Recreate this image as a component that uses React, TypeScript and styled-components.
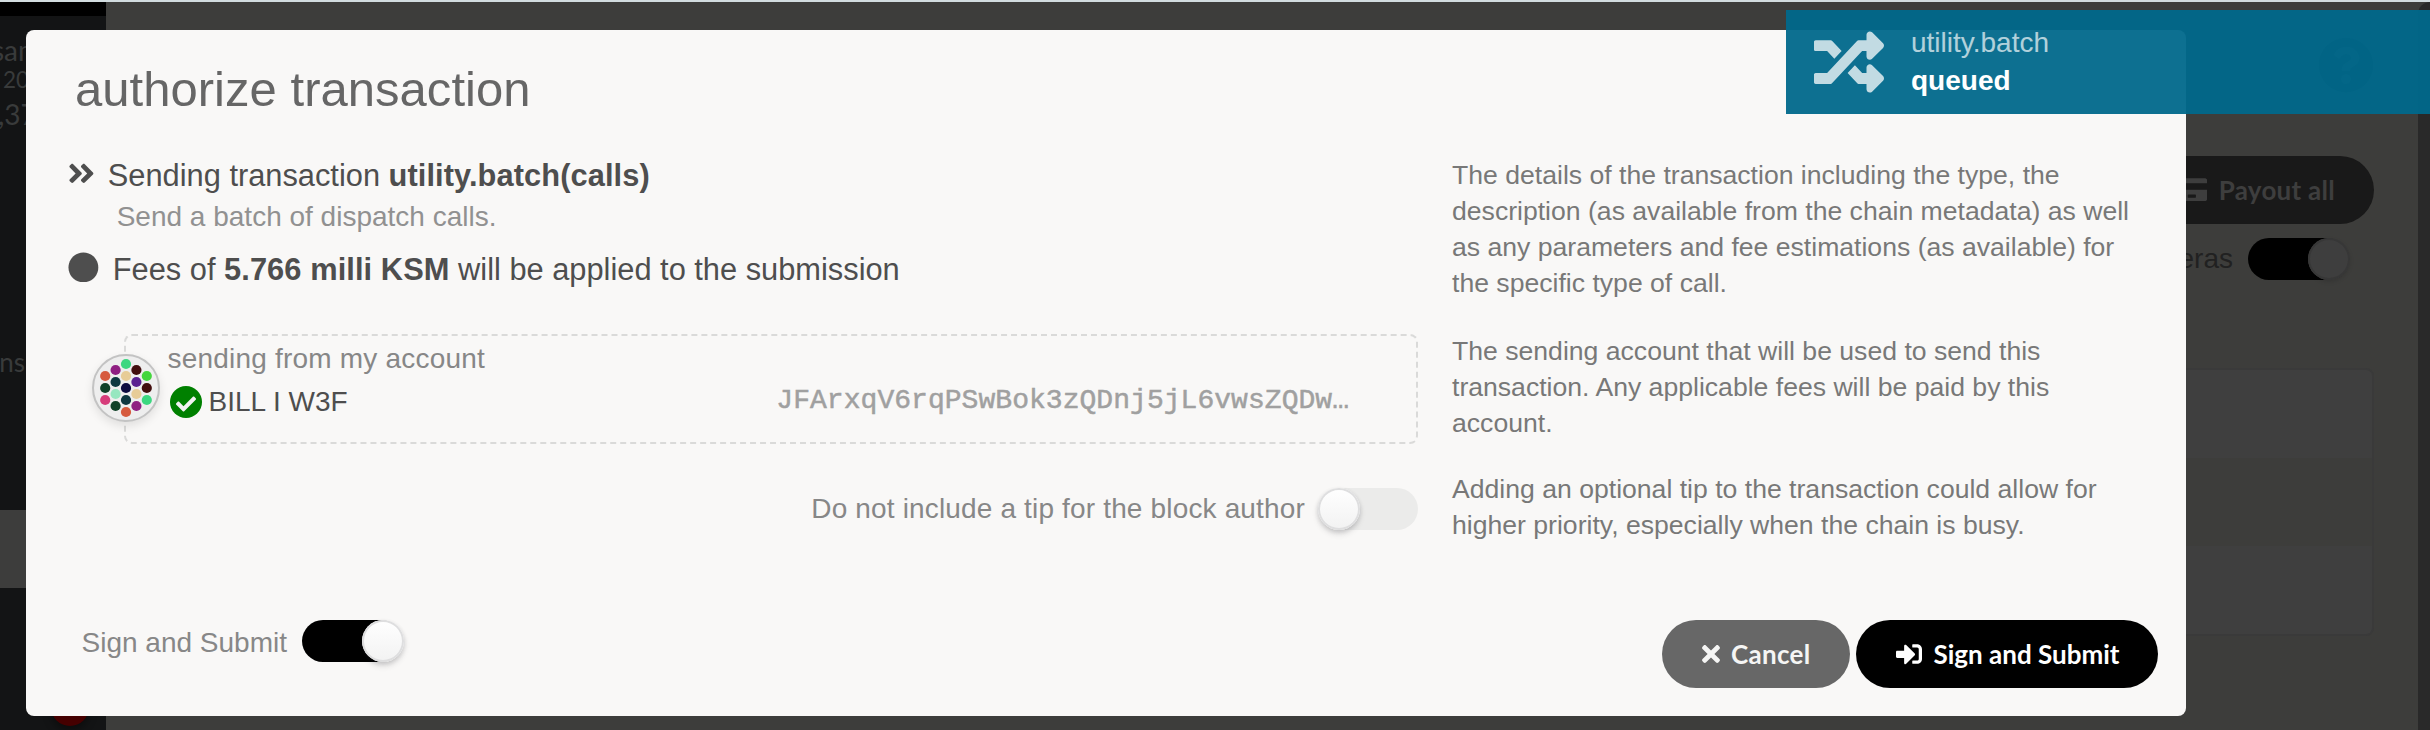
import React from 'react';
import styled, { createGlobalStyle, css } from 'styled-components';
import {
  FaAngleDoubleRight,
  FaCheck,
  FaCircle,
  FaCreditCard,
  FaQuestionCircle,
  FaRandom,
  FaSignInAlt,
  FaTimes,
} from 'react-icons/fa';

const sans = '"Liberation Sans", Arial, Helvetica, sans-serif';
const lato = 'Lato, "Liberation Sans", sans-serif';
const mono = '"Liberation Mono", "Courier New", monospace';

const GlobalStyle = createGlobalStyle`
  *, *::before, *::after { box-sizing: border-box; }
  body { margin: 0; background: #3d3d3b; font-family: ${sans}; }
  svg { display: block; flex: none; }
`;

const Screen = styled.div`
  position: relative;
  width: 2430px;
  height: 730px;
  overflow: hidden;
  border-top: 2px solid #d2dcdf;
`;

/* ---------- page behind the dialog ---------- */

const Backdrop = styled.div`
  display: flex;
  height: 100%;
`;

const Sidebar = styled.aside`
  flex: none;
  display: flex;
  flex-direction: column;
  width: 106px;
  background: #131415;
  border-top: 14px solid #000;
  color: #393b3b;
  font-family: ${lato};
  white-space: nowrap;
  overflow: hidden;
`;

const ChainLine = styled.div<{ $size: number; $height: number; $shift: number }>`
  font-size: ${(p) => p.$size}px;
  line-height: ${(p) => p.$height}px;
  margin-left: ${(p) => p.$shift}px;
`;

const ChainInfo = styled.div`
  padding-top: 16px;
  height: 306px;
`;

const MenuItem = styled.div`
  display: flex;
  justify-content: flex-end;
  width: 25px;
  height: 80px;
  line-height: 80px;
  font-size: 26px;
  font-weight: 400;
`;

const ActiveItem = styled.div`
  height: 78px;
  margin-top: 108px;
  background: #3d3d3c;
`;

const AlertDot = styled.div`
  flex: none;
  width: 38px;
  height: 38px;
  margin: 100px 0 0 51px;
  border-radius: 50%;
  background: #450000;
  box-shadow: 0 4px 8px rgba(0, 0, 0, 0.4);
`;

const Main = styled.main`
  flex: 1;
  display: flex;
  flex-direction: column;
  align-items: flex-end;
  padding: 35px 44px 0 40px;
  background: #3d3d3b;
  color: #212121;
`;

const Gutter = styled.div`
  flex: none;
  width: 12px;
  border-top-left-radius: 12px;
  background: #292929;
`;

const GutterWell = styled.div`
  flex: none;
  display: flex;
  background: #3d3d3b;
`;

const HelpIcon = styled.div`
  font-size: 56px;
  color: #191919;
`;

const PayoutButton = styled.div`
  display: flex;
  align-items: center;
  gap: 12px;
  height: 68px;
  margin-top: 63px;
  padding: 0 39px;
  border-radius: 34px;
  background: #191919;
  color: #3e3e3e;
  font: 700 26px ${lato};
  letter-spacing: 0.27px;

  svg {
    font-size: 29.25px;
  }
`;

const ErasRow = styled.div`
  display: flex;
  margin: 14px 26px 0 0;
`;

const Summary = styled.div`
  flex: none;
  align-self: stretch;
  margin-top: 88px;
  border: 2px solid #3a3a3a;
  border-radius: 8px;
  overflow: hidden;
`;

const SummaryRow = styled.div<{ $odd?: boolean }>`
  height: 88px;
  background: ${(p) => (p.$odd ? '#3f3f3f' : '#3d3d3b')};
`;

/* ---------- toggle ---------- */

const ToggleLabel = styled.span<{ $gap: number; $nudge: number }>`
  margin: ${(p) => p.$nudge}px ${(p) => p.$gap}px 0 0;
  font-size: 28px;
  line-height: 42px;
  white-space: nowrap;
`;

const Track = styled.span<{ $on?: boolean; $dim?: boolean }>`
  flex: none;
  display: flex;
  width: 100px;
  height: 42px;
  padding-left: ${(p) => (p.$on ? 60 : 0)}px;
  border-radius: 21px;
  background: ${(p) => (p.$on ? '#000' : '#ebebea')};

  &::after {
    content: '';
    flex: none;
    width: 42px;
    height: 42px;
    border-radius: 50%;
    ${(p) =>
      p.$dim
        ? css`
            background: #3e3e3e;
            box-shadow: 0 2px 4px rgba(0, 0, 0, 0.12), inset 0 0 0 2px #373737;
          `
        : css`
            background: linear-gradient(#fff, #f2f2f2);
            box-shadow: 0 2px 4px rgba(34, 36, 38, 0.15), 0 4px 6px rgba(34, 36, 38, 0.12),
              inset 0 0 0 2px #dededf;
          `}
  }
`;

/* ---------- dialog ---------- */

const Dialog = styled.section`
  position: absolute;
  top: 28px;
  left: 26px;
  display: flex;
  flex-direction: column;
  width: 2160px;
  height: 686px;
  padding: 29px 28px 28px 42px;
  border-radius: 8px;
  background: #f9f8f7;
  color: #4e4e4e;
`;

const Title = styled.h1`
  margin: 0 0 36px 7px;
  font-size: 49px;
  line-height: 60px;
  font-weight: 400;
  letter-spacing: 0.03px;
  color: #666;
`;

const Columns = styled.div`
  flex: 1;
  display: grid;
  grid-template-columns: 1350px 706px;
  column-gap: 34px;
  align-items: start;
`;

const Details = styled.div`
  display: flex;
  flex-direction: column;
`;

const InfoLine = styled.div<{ $gap: number; $inset?: number }>`
  display: flex;
  align-items: center;
  gap: ${(p) => p.$gap}px;
  height: 40px;
  font-size: 30.8px;
  line-height: 40px;
  white-space: pre;

  svg {
    margin: 0 0 4px ${(p) => p.$inset ?? 0}px;
  }

  span {
    padding-top: 2px;
  }

  strong {
    letter-spacing: 0.08px;
  }
`;

const CallNote = styled.div`
  margin: 2px 0 12px 48.7px;
  font-size: 28px;
  line-height: 40px;
  color: #919191;
`;

const Account = styled.div`
  position: relative;
  display: flex;
  flex-direction: column;
  height: 110px;
  margin: 45px 0 44px 56px;
  padding: 7px 66px 0 41.6px;
  border: 2px dashed #dadad9;
  border-radius: 8px;
`;

const Avatar = styled.div`
  position: absolute;
  top: 18px;
  left: -34px;
  width: 68px;
  height: 68px;
  border: 2px solid #c3c3c3;
  border-radius: 50%;
  background: #eee;
  box-shadow: 0 4px 10px rgba(0, 0, 0, 0.1);
`;

const AccountLabel = styled.div`
  font-size: 28px;
  line-height: 32px;
  letter-spacing: 0.2px;
  color: #878787;
`;

const AccountRow = styled.div`
  display: flex;
  align-items: center;
  height: 32px;
  margin-top: 11px;
`;

const Verified = styled.span`
  display: flex;
  align-items: center;
  justify-content: center;
  width: 32px;
  height: 32px;
  margin: 0 7px 0 2px;
  border-radius: 50%;
  background: #008000;
  color: #f2f2f2;
  font-size: 20px;

  svg {
    margin-top: 4px;
  }
`;

const AccountName = styled.span`
  font-size: 28px;
  line-height: 32px;
`;

const Address = styled.span`
  margin: -2px 1px 0 auto;
  font-family: ${mono};
  font-size: 28px;
  line-height: 32px;
  letter-spacing: 0.04px;
  color: #a0a0a0;
  -webkit-text-stroke: 0.5px #a0a0a0;
`;

const TipRow = styled.div`
  display: flex;
  justify-content: flex-end;
  color: #878787;
  letter-spacing: 0.16px;
`;

const Help = styled.div`
  display: flex;
  flex-direction: column;
  padding-top: 2px;
  font-size: 26.6px;
  line-height: 36px;
  color: #787878;
  white-space: pre-line;
`;

const HelpText = styled.p<{ $after?: number }>`
  margin: 0 0 ${(p) => p.$after ?? 0}px;
`;

const Footer = styled.footer`
  flex: none;
  display: flex;
  align-items: flex-start;
  justify-content: space-between;
`;

const SignToggle = styled.div`
  display: flex;
  margin-left: 13.5px;
  color: #878787;
`;

const Actions = styled.div`
  display: flex;
  gap: 6px;
`;

const ActionButton = styled.button<{ $primary?: boolean; $width: number }>`
  display: flex;
  align-items: center;
  gap: ${(p) => (p.$primary ? 11.5 : 7)}px;
  width: ${(p) => p.$width}px;
  height: 68px;
  padding: 0 0 0 ${(p) => (p.$primary ? 40 : 36)}px;
  border: 0;
  border-radius: 34px;
  background: ${(p) => (p.$primary ? '#000' : '#676767')};
  color: ${(p) => (p.$primary ? '#fff' : '#f5f5f4')};
  font: 700 26px ${lato};
  letter-spacing: ${(p) => (p.$primary ? 0 : 0.3)}px;
  white-space: nowrap;
`;

/* ---------- notification ---------- */

const Toast = styled.div`
  position: absolute;
  top: 8px;
  left: 1786px;
  right: 0;
  display: flex;
  align-items: center;
  gap: 27px;
  height: 104px;
  padding: 0 0 1px 28px;
  background: rgba(0, 104, 139, 0.95);
  color: #fff;

  svg {
    font-size: 70px;
    opacity: 0.75;
  }
`;

const ToastText = styled.div`
  font-size: 28px;
  line-height: 38px;
`;

const ToastMethod = styled.div`
  opacity: 0.68;
`;

const ToastStatus = styled.div`
  font-weight: 700;
`;

const dots: [number, number, string][] = [
  [0, -24, '#3cd780'],
  [-10.4, -18, '#8f1f82'],
  [10.4, -18, '#420e0e'],
  [-20.8, -12, '#d65b3e'],
  [0, -12, '#e7cc97'],
  [20.8, -12, '#43d63c'],
  [-10.4, -6, '#0e3840'],
  [10.4, -6, '#5a2191'],
  [-20.8, 0, '#0f4128'],
  [0, 0, '#0d0c40'],
  [20.8, 0, '#420e0e'],
  [-10.4, 6, '#97e7c0'],
  [10.4, 6, '#e7cc97'],
  [-20.8, 12, '#d63c7a'],
  [0, 12, '#0e3840'],
  [20.8, 12, '#3cd780'],
  [-10.4, 18, '#0f4128'],
  [10.4, 18, '#8f1f82'],
  [0, 24, '#d65b3e'],
];

const Identicon = () => (
  <Avatar>
    <svg width="64" height="64" viewBox="-32 -32 64 64">
      {dots.map(([x, y, fill]) => (
        <circle key={`${x},${y}`} cx={x} cy={y} r="5.1" fill={fill} />
      ))}
    </svg>
  </Avatar>
);

export default function App() {
  return (
    <>
      <GlobalStyle />
      <Screen>
        <Backdrop>
          <Sidebar>
            <ChainInfo>
              <ChainLine $size={28} $height={36} $shift={-8}>sama</ChainLine>
              <ChainLine $size={22.5} $height={24} $shift={3}>2025</ChainLine>
              <ChainLine $size={28} $height={44} $shift={-2}>,373</ChainLine>
            </ChainInfo>
            <MenuItem>ns</MenuItem>
            <ActiveItem />
            <AlertDot />
          </Sidebar>
          <Main>
            <HelpIcon><FaQuestionCircle /></HelpIcon>
            <PayoutButton>
              <FaCreditCard />
              Payout all
            </PayoutButton>
            <ErasRow>
              <ToggleLabel $gap={15} $nudge={0}>eras</ToggleLabel>
              <Track $on $dim />
            </ErasRow>
            <Summary>
              <SummaryRow $odd />
              <SummaryRow />
              <SummaryRow $odd />
            </Summary>
          </Main>
          <GutterWell><Gutter /></GutterWell>
        </Backdrop>

        <Dialog>
          <Title>authorize transaction</Title>
          <Columns>
            <Details>
              <InfoLine $gap={11} $inset={-2}>
                <FaAngleDoubleRight />
                <span>Sending transaction <strong>utility.batch(calls)</strong></span>
              </InfoLine>
              <CallNote>Send a batch of dispatch calls.</CallNote>
              <InfoLine $gap={14}>
                <FaCircle />
                <span>Fees of <strong>5.766 milli KSM</strong> will be applied to the submission</span>
              </InfoLine>
              <Account>
                <Identicon />
                <AccountLabel>sending from my account</AccountLabel>
                <AccountRow>
                  <Verified><FaCheck /></Verified>
                  <AccountName>BILL I W3F</AccountName>
                  <Address>JFArxqV6rqPSwBok3zQDnj5jL6vwsZQDw…</Address>
                </AccountRow>
              </Account>
              <TipRow>
                <ToggleLabel $gap={13} $nudge={0}>Do not include a tip for the block author</ToggleLabel>
                <Track />
              </TipRow>
            </Details>
            <Help>
              <HelpText $after={32}>
                {'The details of the transaction including the type, the\ndescription (as available from the chain metadata) as well\nas any parameters and fee estimations (as available) for\nthe specific type of call.'}
              </HelpText>
              <HelpText $after={30}>
                {'The sending account that will be used to send this\ntransaction. Any applicable fees will be paid by this\naccount.'}
              </HelpText>
              <HelpText>
                {'Adding an optional tip to the transaction could allow for\nhigher priority, especially when the chain is busy.'}
              </HelpText>
            </Help>
          </Columns>
          <Footer>
            <SignToggle>
              <ToggleLabel $gap={15} $nudge={2}>Sign and Submit</ToggleLabel>
              <Track $on />
            </SignToggle>
            <Actions>
              <ActionButton $width={188}><FaTimes />Cancel</ActionButton>
              <ActionButton $primary $width={302}><FaSignInAlt />Sign and Submit</ActionButton>
            </Actions>
          </Footer>
        </Dialog>

        <Toast>
          <FaRandom />
          <ToastText>
            <ToastMethod>utility.batch</ToastMethod>
            <ToastStatus>queued</ToastStatus>
          </ToastText>
        </Toast>
      </Screen>
    </>
  );
}
